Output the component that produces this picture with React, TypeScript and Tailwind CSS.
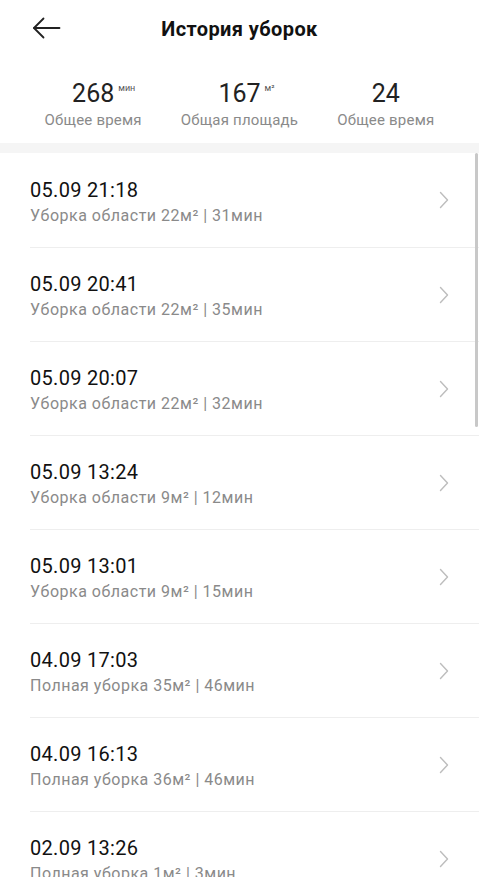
import * as React from "react";

const items = [
    { time: "05.09 21:18", desc: "Уборка области 22м² | 31мин" },
    { time: "05.09 20:41", desc: "Уборка области 22м² | 35мин" },
    { time: "05.09 20:07", desc: "Уборка области 22м² | 32мин" },
    { time: "05.09 13:24", desc: "Уборка области 9м² | 12мин" },
    { time: "05.09 13:01", desc: "Уборка области 9м² | 15мин" },
    { time: "04.09 17:03", desc: "Полная уборка 35м² | 46мин" },
    { time: "04.09 16:13", desc: "Полная уборка 36м² | 46мин" },
    { time: "02.09 13:26", desc: "Полная уборка 1м² | 3мин" },
];

const stats = [
    { value: "268", unit: "мин", label: "Общее время" },
    { value: "167", unit: "м²", label: "Общая площадь" },
    { value: "24", unit: "", label: "Общее время" },
];

export default function App() {
    return (
        <div className="relative h-[877px] w-[479px] overflow-hidden bg-white font-['Roboto',sans-serif]">
            {/* header */}
            <div className="relative flex h-[58px] items-center justify-center">
                <button type="button" aria-label="Назад" className="absolute left-[32px] top-[17px] text-[#222]">
                    <svg width="29" height="22" viewBox="0 0 29 22" fill="none" stroke="currentColor" strokeWidth="1.8" strokeLinecap="round" strokeLinejoin="round">
                        <path d="M27.5 11H2" />
                        <path d="M11.5 1.5L2 11l9.5 9.5" />
                    </svg>
                </button>
                <h1 className="text-[20px] font-bold tracking-[0.4px] text-[#111]">История уборок</h1>
            </div>

            {/* stats */}
            <div className="grid h-[85px] grid-cols-3 px-5 pt-[21px]">
                {stats.map((s, i) => (
                    <div key={i} className="flex flex-col items-center">
                        <div className="relative leading-none">
                            <span className="text-[25px] leading-[30px] text-[#222]">{s.value}</span>
                            {s.unit && (
                                <span className="absolute left-full top-[5px] ml-[4px] text-[9px] leading-none text-[#555]">{s.unit}</span>
                            )}
                        </div>
                        <span className="mt-[1px] text-[15px] leading-[20px] tracking-[0.2px] text-[#8a8a8a]">{s.label}</span>
                    </div>
                ))}
            </div>

            <div className="h-[10px] bg-[#f5f5f5]" />

            {/* list */}
            <ul>
                {items.map((it, i) => (
                    <li key={i} className="pl-[30px]">
                        <div className={"flex h-[94px] items-center pr-[30px] " + (i > 0 ? "border-t border-[#eeeeee]" : "")}>
                            <div className="flex-1 pt-[3px]">
                                <p className="text-[20px] leading-[24px] tracking-[0.3px] text-[#111]">{it.time}</p>
                                <p className="mt-[4px] text-[16px] leading-[20px] tracking-[0.5px] text-[#8a8a8a]">{it.desc}</p>
                            </div>
                            <svg width="10" height="18" viewBox="0 0 10 18" fill="none" stroke="#bdbdbd" strokeWidth="1.4" strokeLinecap="round" strokeLinejoin="round">
                                <path d="M1.5 1.5L8.5 9l-7 7.5" />
                            </svg>
                        </div>
                    </li>
                ))}
            </ul>

            {/* scrollbar */}
            <div className="absolute right-[1px] top-[153px] h-[274px] w-[3px] rounded-full bg-[#c8c8c8]" />
        </div>
    );
}
